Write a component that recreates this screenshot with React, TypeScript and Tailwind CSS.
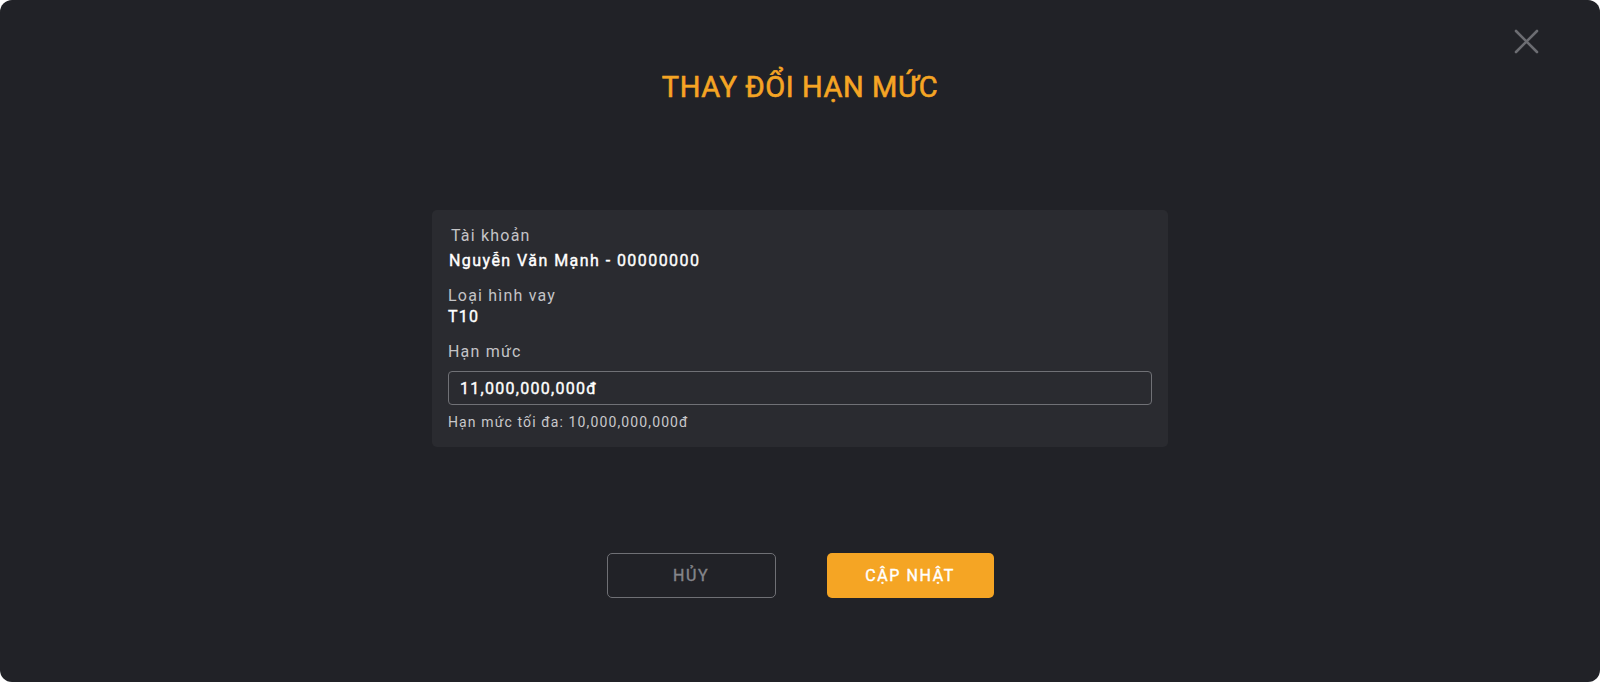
import React from "react";

const med = "font-normal [-webkit-text-stroke:0.4px_currentColor]";

export default function App() {
  return (
    <div className="w-[1600px] h-[682px] bg-white" style={{ fontFamily: "Roboto, 'Noto Sans', sans-serif" }}>
      <div className="relative w-full h-full rounded-[12px] bg-[#212227] flex flex-col items-center">
        <button className="absolute right-[61px] top-[29px] w-[25px] h-[25px] flex items-center justify-center">
          <svg width="25" height="25" viewBox="0 0 25 25" fill="none">
            <path d="M2 2L23 23M23 2L2 23" stroke="#6c6d72" strokeWidth="2.6" strokeLinecap="round" />
          </svg>
        </button>

        <h1 className="mt-[69px] text-[29px] leading-[36px] font-normal [-webkit-text-stroke:0.6px_currentColor] text-[#f5a524] tracking-[0.02em]">
          THAY ĐỔI HẠN MỨC
        </h1>

        <div className="mt-[105px] w-[736px] rounded-[5px] bg-[#2a2b30] px-4 pt-[14px] pb-[15px]">
          <div className="pl-[3px] text-[16px] leading-[24px] text-[#c4c4c7] tracking-[0.075em]">Tài khoản</div>
          <div className={`pl-[1px] mt-[1px] text-[16px] leading-[24px] text-white tracking-[0.09em] ${med}`}>
            Nguyễn Văn Mạnh - 00000000
          </div>
          <div className="mt-[12px] text-[16px] leading-[21px] text-[#c4c4c7] tracking-[0.075em]">Loại hình vay</div>
          <div className={`text-[16px] leading-[21px] text-white tracking-[0.075em] ${med}`}>T10</div>
          <div className="mt-[13px] text-[16px] leading-[24px] text-[#c4c4c7] tracking-[0.075em]">Hạn mức</div>
          <div className="mt-[7px] h-[34px] rounded-[4px] border border-[#707176] flex items-center px-[11px] pt-[1px]">
            <span className={`text-[16px] text-white tracking-[0.08em] ${med}`}>11,000,000,000đ</span>
          </div>
          <div className="mt-[7px] text-[14px] leading-[20px] text-[#c8c8cb] tracking-[0.08em]">Hạn mức tối đa: 10,000,000,000đ</div>
        </div>

        <div className="mt-[106px] flex gap-[51px]">
          <button className={`w-[169px] h-[45px] rounded-[5px] border border-[#6f7075] text-[#85868b] text-[16px] tracking-[0.1em] ${med}`}>
            HỦY
          </button>
          <button className={`w-[167px] h-[45px] rounded-[5px] bg-[#f5a524] text-white text-[16px] tracking-[0.1em] ${med}`}>
            CẬP NHẬT
          </button>
        </div>
      </div>
    </div>
  );
}
